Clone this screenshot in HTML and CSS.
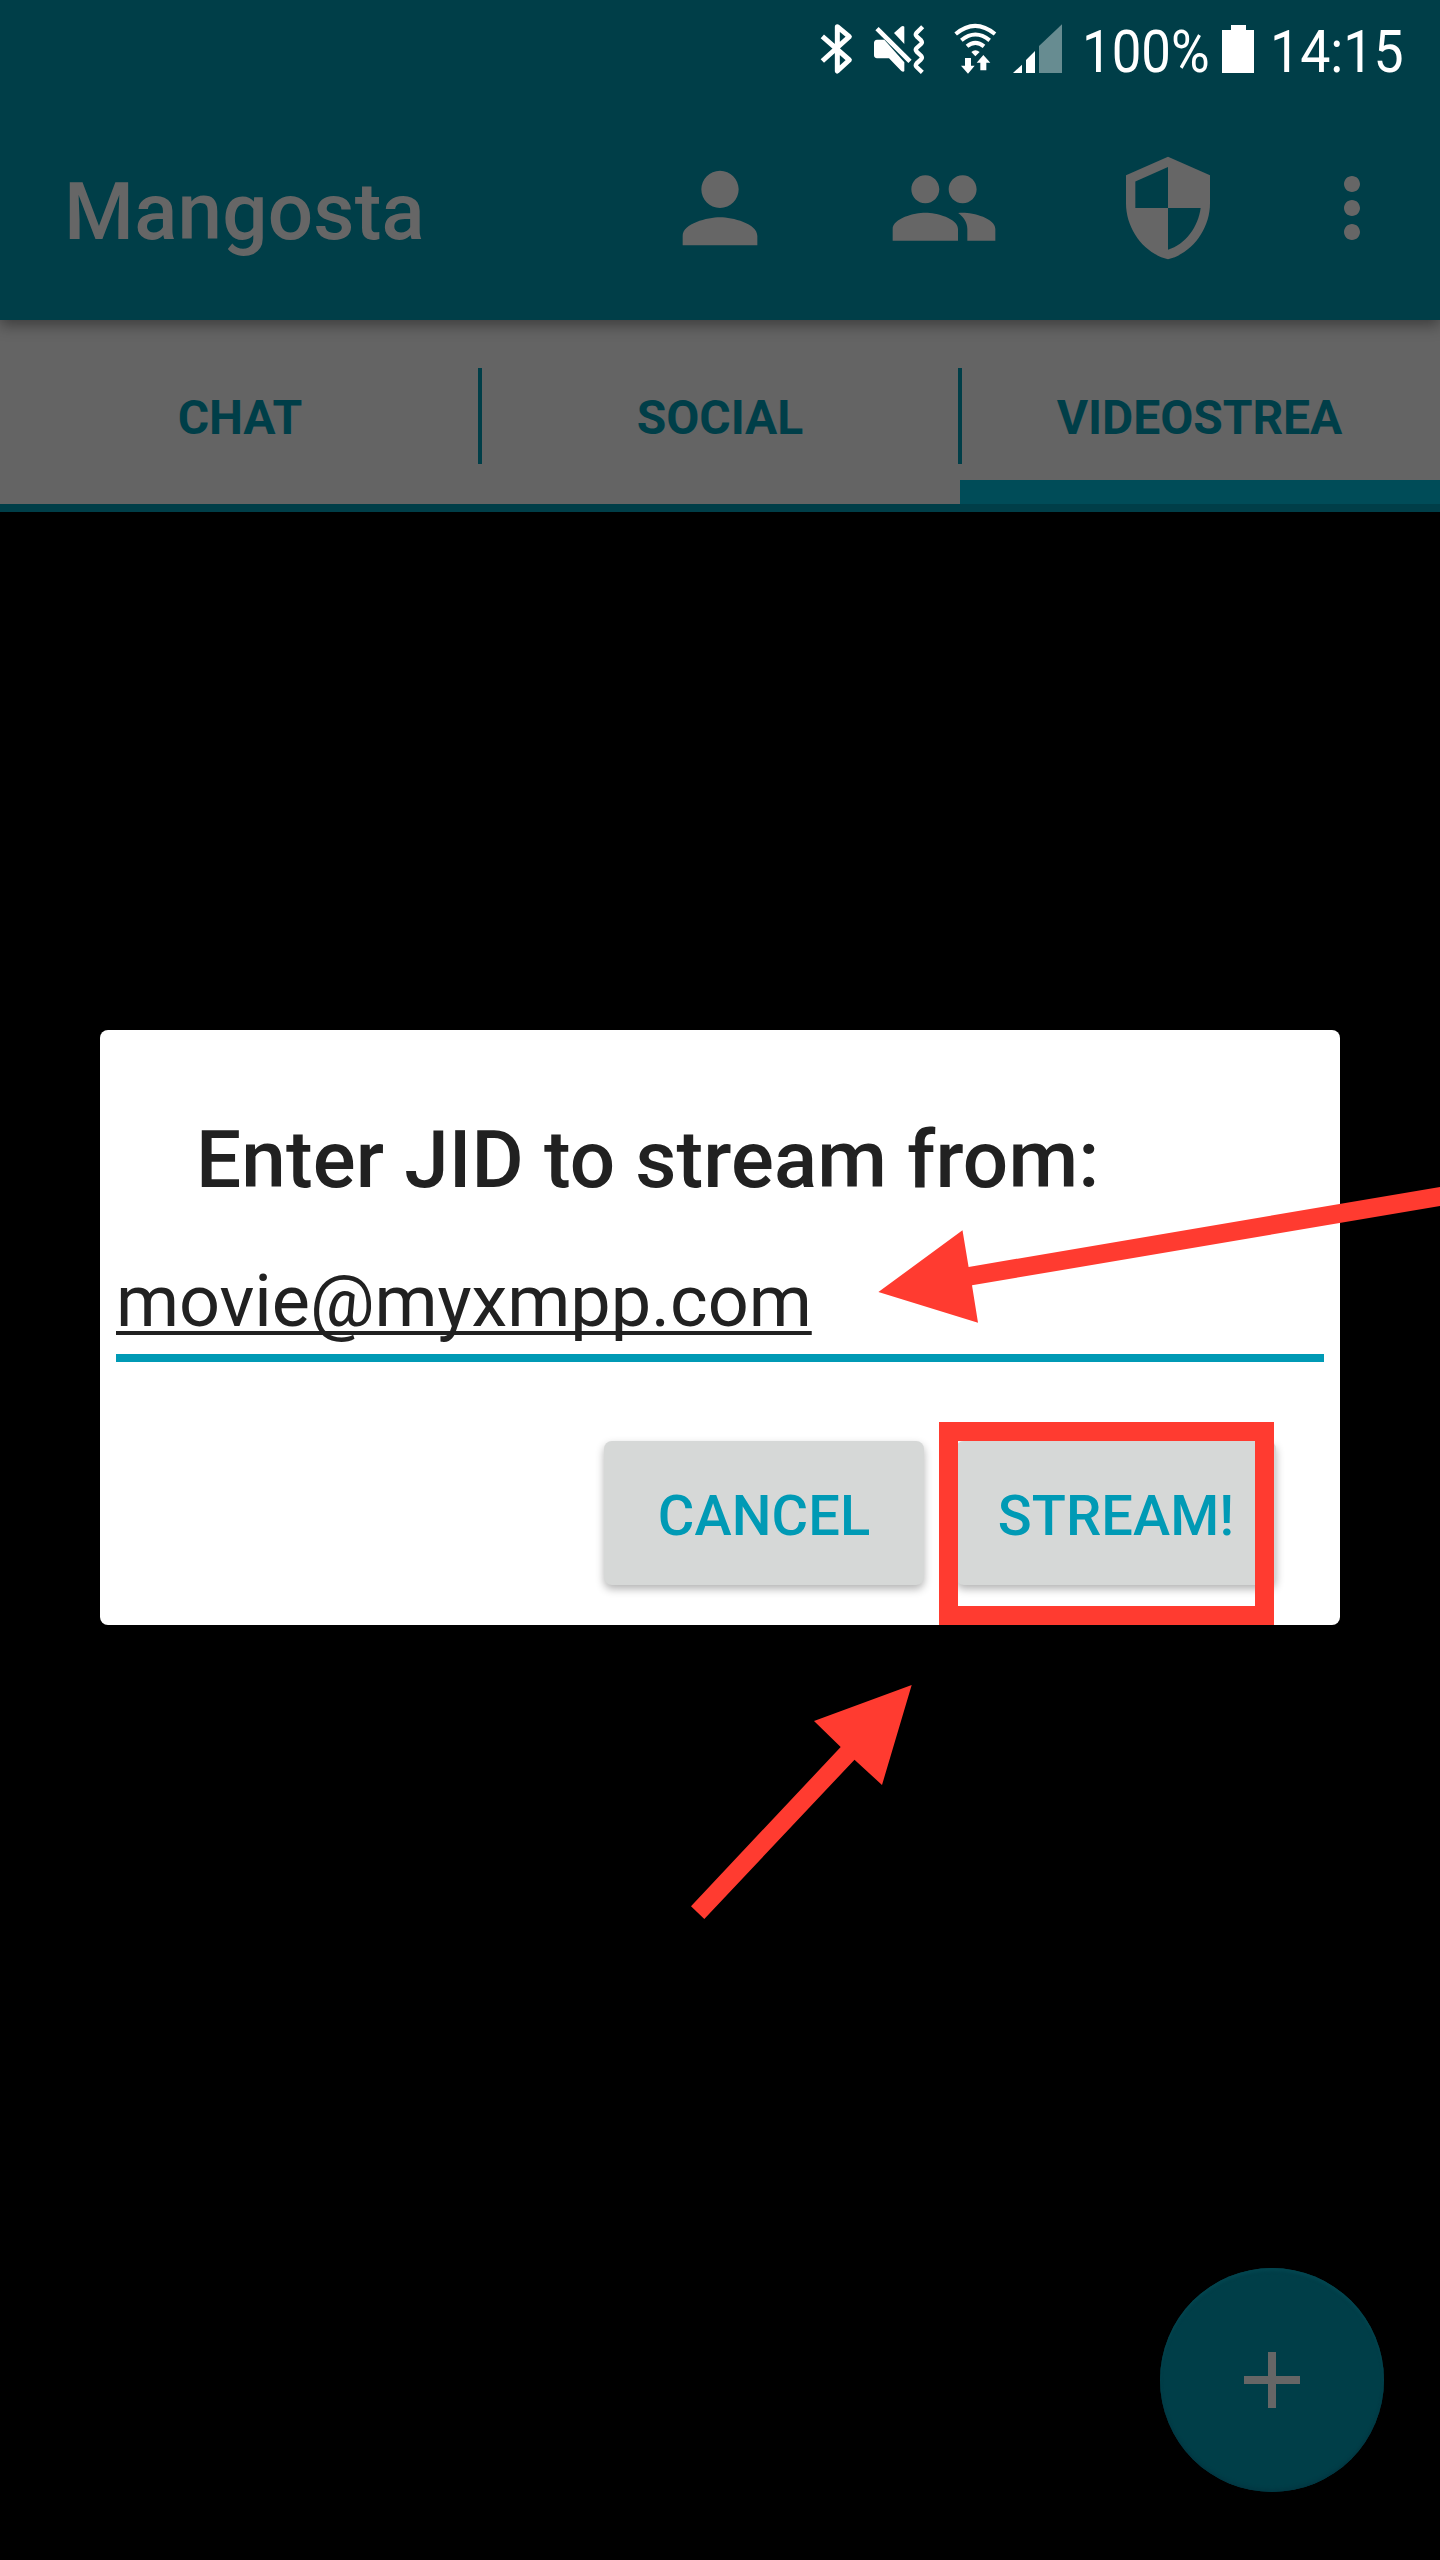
FILE: index.html
```html
<!DOCTYPE html>
<html lang="en">
<head>
<meta charset="utf-8">
<title>Mangosta</title>
<link rel="stylesheet" href="styles.css">
</head>
<body>
<div class="screen">
  <header class="top">
    <div class="status">
      <svg class="bluetooth" width="33" height="56" viewBox="60 60 99 168" fill="none" stroke="#fff" stroke-width="15" stroke-linejoin="round"><path d="M67 109 L148 180 L112 213 V80 L148 110 L67 183"/></svg>
      <svg class="mute" width="53" height="56" viewBox="219 60 159 168" fill="#fff"><path d="M231 86 L330 184" stroke="#fff" stroke-width="14"/><path d="M231 119 H253 L313 187 V213 Q310 217 304 213 L267 175 H231 Q222 174 222 166 V129 Q222 120 231 119Z"/><path d="M282 99 L303 80 Q309 76 313 80 V132Z"/><path d="M368 80 L350 98 Q345 104 350 109 L363 121 Q368 127 363 132 L350 144 Q345 149 350 155 L363 167 Q368 173 363 178 L350 190 Q345 196 350 201 L367 217" fill="none" stroke="#fff" stroke-width="13"/></svg>
      <svg class="wifi" width="43" height="56" viewBox="462 60 129 168" fill="none" stroke="#fff" stroke-width="12"><path d="M467 102 Q525 53 585 102M484 121 Q526 86 569 121M501 139 Q526 118 552 139"/><path d="M514 156 Q526 145 539 156 L526 169Z M495 174 H513 V197 H524 L504 221 L483 197 H495Z M541 211 V188 H530 L550 165 L571 188 H559 V211Z" fill="#fff" stroke="none"/></svg>
      <svg class="signal" width="50" height="56" viewBox="639 60 150 168" fill="#fff"><path d="M639 219 L666 194 V219ZM678 219 V180 L705 153 V219Z"/><path d="M717 219 V138 L786 73 V219Z" fill="#678c91"/></svg>
      <span class="percent">100%</span>
      <svg class="battery" width="32" height="56" viewBox="0 0 32 56"><path d="M0 10H9V5H24V10H32V53H0Z" fill="#fff"/></svg>
      <span class="clock">14:15</span>
    </div>
    <div class="appbar">
      <h1 class="app-title">Mangosta</h1>
      <nav class="actions">
        <svg width="112" height="112" viewBox="0 0 24 24"><path d="M12 12c2.21 0 4-1.79 4-4s-1.79-4-4-4-4 1.79-4 4 1.79 4 4 4zm0 2c-2.67 0-8 1.34-8 4v2h16v-2c0-2.66-5.33-4-8-4z"/></svg>
        <svg width="112" height="112" viewBox="0 0 24 24"><path d="M16 11c1.66 0 2.99-1.34 2.99-3S17.66 5 16 5c-1.66 0-3 1.34-3 3s1.34 3 3 3zm-8 0c1.66 0 2.99-1.34 2.99-3S9.66 5 8 5C6.34 5 5 6.34 5 8s1.34 3 3 3zm0 2c-2.33 0-7 1.17-7 3.5V19h14v-2.5c0-2.33-4.67-3.5-7-3.5zm8 0c-.29 0-.62.02-.97.05 1.16.84 1.97 1.97 1.97 3.45V19h6v-2.5c0-2.33-4.67-3.5-7-3.5z"/></svg>
        <svg width="112" height="112" viewBox="0 0 24 24"><path d="M12 1L3 5v6c0 5.55 3.84 10.74 9 12 5.16-1.26 9-6.45 9-12V5l-9-4zm0 10.99h7c-.53 4.12-3.28 7.79-7 8.94V12H5V6.3l7-3.11v8.8z"/></svg>
      </nav>
      <svg class="more" width="96" height="96" viewBox="0 0 24 24"><path d="M12 8c1.1 0 2-.9 2-2s-.9-2-2-2-2 .9-2 2 .9 2 2 2zm0 2c-1.1 0-2 .9-2 2s.9 2 2 2 2-.9 2-2-.9-2-2-2zm0 6c-1.1 0-2 .9-2 2s.9 2 2 2 2-.9 2-2-.9-2-2-2z"/></svg>
    </div>
  </header>
  <div class="tabs">
    <div class="tab">CHAT</div>
    <div class="divider"></div>
    <div class="tab">SOCIAL</div>
    <div class="divider"></div>
    <div class="tab active">VIDEOSTREA</div>
  </div>
  <main class="content">
    <button class="fab"><svg width="56" height="56" viewBox="0 0 56 56"><path d="M24 0h8v24h24v8H32v24h-8V32H0v-8h24z"/></svg></button>
  </main>

  <div class="overlay">
    <section class="dialog">
      <h2 class="dialog-title">Enter JID to stream from:</h2>
      <div class="field"><span class="field-text">movie@myxmpp.com</span></div>
      <div class="buttons">
        <button class="btn">CANCEL</button>
        <button class="btn">STREAM!</button>
      </div>
    </section>
  </div>

  <div class="highlight"></div>
  <svg class="annotations" width="1440" height="2560" viewBox="0 0 1440 2560"><path d="M878.4 1292 L962.5 1230.3 L968.6 1267 L1440 1187 V1206 L972 1285.3 L978 1322.7Z M691 1906.3 L704.3 1919 L854.5 1759.7 L882 1785 L911.7 1685 L814 1721 L840.7 1747Z"/></svg>
</div>
</body>
</html>
```
FILE: styles.css
```css
* { box-sizing: border-box; }
body { margin: 0; background: #000; font-family: Roboto, "Liberation Sans", sans-serif; }
svg { display: block; flex: none; }
h1, h2 { margin: 0; font-weight: 500; }
button { border: 0; padding: 0; font: inherit; }

.screen { position: relative; width: 1440px; height: 2560px; overflow: hidden; display: flex; flex-direction: column; background: #000; }

.top { position: relative; z-index: 1; height: 320px; background: #003e48; box-shadow: 0 5px 14px rgba(0, 0, 0, .4); }
.status { height: 96px; display: flex; align-items: center; padding-left: 820px; color: #fff; font-size: 60px; line-height: 70px; }
.mute { margin-left: 20px; }
.wifi { margin-left: 28px; }
.signal { margin-left: 16px; }
.percent, .clock { padding-top: 7px; white-space: nowrap; transform: scaleX(.88); transform-origin: 0 50%; }
.percent { width: 140px; margin-left: 19px; }
.clock { width: 150px; margin-left: 16px; transform: scaleX(.895); }

.appbar { height: 224px; display: flex; align-items: center; padding-left: 64px; }
.app-title { flex: 1; padding-top: 7px; color: #666; font-size: 80px; line-height: 94px; letter-spacing: .2px; }
.appbar svg { fill: #666; }
.actions { display: flex; gap: 112px; }
.more { margin: 0 40px 0 80px; }

.tabs { height: 192px; display: flex; align-items: center; background: #646464; border-bottom: 8px solid #003e48; flex: none; }
.tab { flex: none; width: 480px; height: 184px; display: flex; align-items: center; justify-content: center; padding-top: 11px; color: #003e48; font-size: 48px; font-weight: 700; line-height: 56px; letter-spacing: -.05px; }
.tab.active { border-bottom: 24px solid #004c58; padding-top: 35px; padding-right: 1px; }
.divider { width: 4px; height: 96px; margin: 8px -2px 0; background: #003e48; z-index: 1; }

.content { flex: 1; display: flex; justify-content: flex-end; align-items: flex-end; padding: 0 56px 68px; }
.fab { width: 224px; height: 224px; border-radius: 50%; background: #003e48; display: flex; align-items: center; justify-content: center; box-shadow: inset 0 3px 3px #03454f, inset 0 -3px 3px #023843; }
.fab svg { fill: #666; }

.overlay { position: absolute; inset: 0; z-index: 2; padding: 1030px 100px 0; }
.dialog { height: 595px; padding: 83px 16px 0; border-radius: 8px; background: #fff; }
.dialog-title { padding-left: 80px; color: #212121; font-size: 80px; line-height: 94px; letter-spacing: .13px; }
.field { height: 103px; margin-top: 52px; padding-top: 1px; border-bottom: 8px solid #009ab5; color: #212121; font-size: 72px; line-height: 84px; letter-spacing: -.06px; }
.field-text { text-decoration: underline; text-decoration-thickness: 4px; text-underline-offset: 5px; text-decoration-skip-ink: none; }
.buttons { margin-top: 79px; padding-right: 48px; display: flex; justify-content: flex-end; gap: 32px; }
.btn { width: 320px; height: 144px; padding-top: 6px; border-radius: 8px; background: #d6d8d7; box-shadow: 0 4px 9px rgba(0, 0, 0, .3); color: #009ab5; font-size: 56px; font-weight: 500; line-height: 66px; letter-spacing: .1px; }

.highlight { position: absolute; z-index: 3; left: 939px; top: 1422px; width: 335px; height: 203px; border: 19px solid #ff3b30; }
.annotations { position: absolute; z-index: 3; left: 0; top: 0; fill: #ff3b30; }
```
